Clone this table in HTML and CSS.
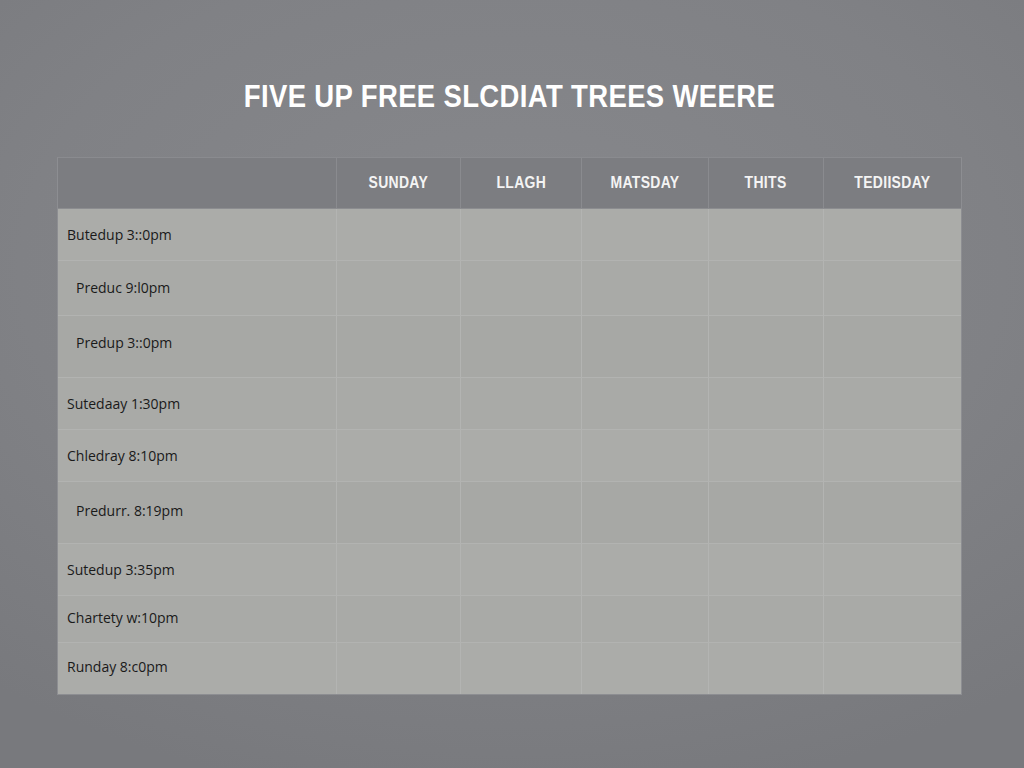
FILE: index.html
```html
<!DOCTYPE html>
<html>
<head>
<meta charset="utf-8">
<link rel="stylesheet" href="styles.css">
</head>
<body>
<div class="page">
  <h1 class="title"><span class="squeeze">FIVE UP FREE SLCDIAT TREES WEERE</span></h1>
  <div class="table">
    <div class="row head">
      <div class="cell"></div>
      <div class="cell day"><span class="squeeze">SUNDAY</span></div>
      <div class="cell day"><span class="squeeze">LLAGH</span></div>
      <div class="cell day"><span class="squeeze">MATSDAY</span></div>
      <div class="cell day"><span class="squeeze">THITS</span></div>
      <div class="cell day"><span class="squeeze">TEDIISDAY</span></div>
    </div>
    <div class="row r52"><div class="cell label">Butedup 3::0pm</div><div class="cell"></div><div class="cell"></div><div class="cell"></div><div class="cell"></div><div class="cell"></div></div>
    <div class="row r55 alt"><div class="cell label indent">Preduc 9:l0pm</div><div class="cell"></div><div class="cell"></div><div class="cell"></div><div class="cell"></div><div class="cell"></div></div>
    <div class="row r62 up"><div class="cell label indent">Predup 3::0pm</div><div class="cell"></div><div class="cell"></div><div class="cell"></div><div class="cell"></div><div class="cell"></div></div>
    <div class="row r52 alt"><div class="cell label">Sutedaay 1:30pm</div><div class="cell"></div><div class="cell"></div><div class="cell"></div><div class="cell"></div><div class="cell"></div></div>
    <div class="row r52"><div class="cell label">Chledray 8:10pm</div><div class="cell"></div><div class="cell"></div><div class="cell"></div><div class="cell"></div><div class="cell"></div></div>
    <div class="row r62 alt"><div class="cell label indent">Predurr. 8:19pm</div><div class="cell"></div><div class="cell"></div><div class="cell"></div><div class="cell"></div><div class="cell"></div></div>
    <div class="row r52"><div class="cell label">Sutedup 3:35pm</div><div class="cell"></div><div class="cell"></div><div class="cell"></div><div class="cell"></div><div class="cell"></div></div>
    <div class="row r47 alt"><div class="cell label">Chartety w:10pm</div><div class="cell"></div><div class="cell"></div><div class="cell"></div><div class="cell"></div><div class="cell"></div></div>
    <div class="row r51 last"><div class="cell label">Runday 8:c0pm</div><div class="cell"></div><div class="cell"></div><div class="cell"></div><div class="cell"></div><div class="cell"></div></div>
  </div>
</div>
</body>
</html>
```

FILE: styles.css
```css
html, body {
  margin: 0;
  padding: 0;
}
body {
  width: 1024px;
  height: 768px;
  overflow: hidden;
  background: radial-gradient(ellipse 80% 70% at 50% 35%, #87888c 0%, #808185 60%, #78797d 100%);
  font-family: "Open Sans", "DejaVu Sans", sans-serif;
}
.page {
  padding: 79px 62px 0 57px;
}
.title {
  margin: 0 0 42px 0;
  height: 36px;
  line-height: 36px;
  text-align: center;
  color: #ffffff;
  font-family: "Liberation Sans", Arial, sans-serif;
  font-weight: bold;
  font-size: 31px;
  letter-spacing: 0.4px;
  white-space: nowrap;
}
.squeeze {
  display: inline-block;
  transform: scaleX(0.887);
  transform-origin: center;
}
.table {
  width: 905px;
  border: 1px solid #8d8e92;
  border-top-color: #8a8b8f;
  box-sizing: border-box;
  background: #abaca9;
}
.row {
  display: grid;
  grid-template-columns: 279px 124px 121px 127px 115px 1fr;
  border-bottom: 1px solid #b2b3b1;
}
.row.last {
  border-bottom: none;
}
.head {
  height: 50px;
  background: #7c7d81;
  border-bottom: 1px solid #8c8d90;
}
.head .cell {
  border-right: 1px solid #8a8b8f;
}
.cell {
  border-right: 1px solid #b3b4b2;
  display: flex;
  align-items: center;
}
.cell:last-child {
  border-right: none;
}
.day {
  justify-content: center;
  color: #f4f4f4;
  font-family: "Liberation Sans", Arial, sans-serif;
  font-weight: bold;
  font-size: 17px;
  letter-spacing: 0.4px;
  white-space: nowrap;
}
.day .squeeze {
  transform: scaleX(0.82);
}
.label {
  padding-left: 9px;
  color: #1a1a1a;
  font-size: 14px;
  letter-spacing: 0px;
}
.label.indent {
  padding-left: 18px;
}
.r55 .label { padding-bottom: 2px; }
.up .label { padding-bottom: 9px; }
.r62.alt .label { padding-bottom: 5px; }
.r47 .label, .r51 .label { padding-bottom: 4px; }
.r52 { height: 51px; background: #abaca9; }
.r55 { height: 54px; }
.r62 { height: 61px; }
.r47 { height: 46px; }
.r51 { height: 51px; }
.alt { background: #a9aaa7; }
.r62 { background: #a7a8a5; }
.r51 { background: #abaca9; }
```
